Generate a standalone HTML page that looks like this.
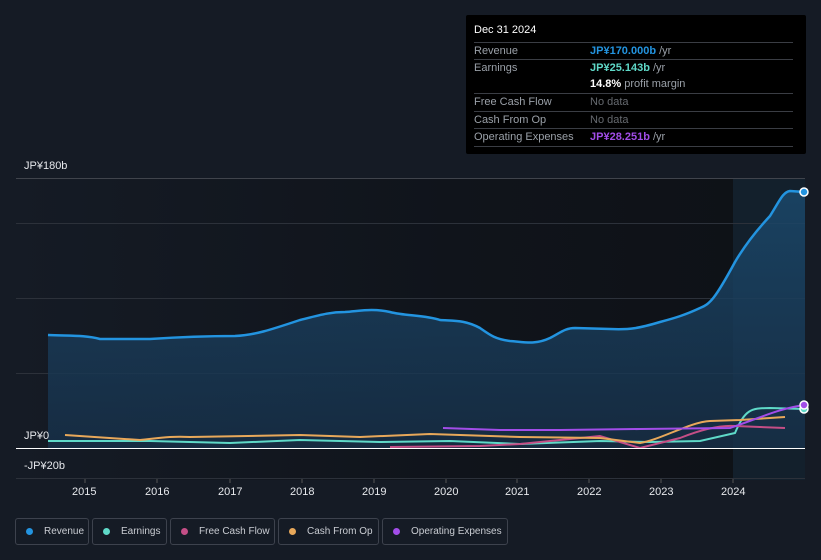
<!DOCTYPE html>
<html><head><meta charset="utf-8"><style>
html,body{margin:0;width:821px;height:560px;overflow:hidden}
body{background:#151b25;font-family:"Liberation Sans",sans-serif;position:relative}
.tt{position:absolute;left:466px;top:15px;width:340px;height:139px;background:#000;border-radius:2px}
.tt .h{position:absolute;left:8px;top:9px;color:#fff;font-size:11px}
.row{position:absolute;left:8px;width:319px;border-top:1px solid #3a3d44;height:17px;font-size:11px;color:#9aa0a8;white-space:nowrap}
.row span{position:absolute;left:116px;top:2px}
.row b{font-weight:bold}
.row .l{position:absolute;left:0;top:2px}
.lg{position:absolute;top:518px;height:27px;border:1px solid #3d424d;border-radius:3px;color:#c9ccd2;font-size:10px;line-height:25px;box-sizing:border-box;white-space:nowrap}
.lg i{position:absolute;left:10px;top:9px;width:7px;height:7px;border-radius:50%}
.lg span{position:absolute;left:28px;top:0}
.ax{position:absolute;color:#e6e8ec;font-size:11px}
</style></head><body>
<svg width="821" height="560" style="position:absolute;left:0;top:0">
<defs>
<linearGradient id="bg" x1="0" x2="1"><stop offset="0" stop-color="#151b25"/><stop offset="0.55" stop-color="#10141b"/><stop offset="1" stop-color="#0e1116"/></linearGradient>
<linearGradient id="rf" x1="0" x2="0" y1="0" y2="1"><stop offset="0" stop-color="#1b4a6e" stop-opacity="0.8"/><stop offset="1" stop-color="#173049" stop-opacity="0.8"/></linearGradient>
</defs>
<rect x="16" y="178" width="789" height="302" fill="url(#bg)"/>
<rect x="733" y="178" width="72" height="302" fill="#13202c"/>
<g stroke="#2c313a" stroke-width="1">
<line x1="16" x2="805" y1="178.5" y2="178.5" stroke="#40444c"/>
<line x1="16" x2="805" y1="223.5" y2="223.5"/>
<line x1="16" x2="805" y1="298.5" y2="298.5"/>
<line x1="16" x2="805" y1="373.5" y2="373.5"/>
<line x1="16" x2="805" y1="478.5" y2="478.5"/>
</g>
<path d="M48 335 C70 336 85 335 100 339 L150 339 C180 337 210 336 235 336 C255 335 270 330 300 320 C320 315 330 312 345 312 C360 311 372 308 390 312 C405 316 425 315 440 320 C455 321 465 320 480 328 C490 335 495 339 510 341 C525 342 535 345 550 338 C560 333 565 328 575 328 L610 329 C630 330 640 328 660 322 C675 318 685 315 700 308 C710 304 715 299 735 262 C745 245 755 232 770 216 C780 200 783 192 790 191 L805 192 L805 448 L48 448 Z" fill="url(#rf)"/>
<path d="M48 335 C70 336 85 335 100 339 L150 339 C180 337 210 336 235 336 C255 335 270 330 300 320 C320 315 330 312 345 312 C360 311 372 308 390 312 C405 316 425 315 440 320 C455 321 465 320 480 328 C490 335 495 339 510 341 C525 342 535 345 550 338 C560 333 565 328 575 328 L610 329 C630 330 640 328 660 322 C675 318 685 315 700 308 C710 304 715 299 735 262 C745 245 755 232 770 216 C780 200 783 192 790 191 L805 192" fill="none" stroke="#2394e0" stroke-width="2.5"/>
<path d="M48 441 L150 441 L230 443 L300 440 L380 442 L450 441 L520 444 L600 441 L650 442 L700 441 L735 433 C745 410 750 408 770 408 L805 409" fill="none" stroke="#5fd9c8" stroke-width="2"/>
<path d="M390 447 L480 446 L520 444 L600 436 L640 448 L680 438 C700 430 720 425 735 426 L785 428" fill="none" stroke="#c44e86" stroke-width="2"/>
<path d="M65 435 L140 440 C160 438 170 436 190 437 L300 435 L360 437 L430 434 L520 437 L600 438 L640 443 C660 440 690 422 710 421 L740 420 L785 417" fill="none" stroke="#e8a85a" stroke-width="2"/>
<path d="M443 428 L500 430 L560 430 L640 429 L730 428 C760 418 780 408 805 405" fill="none" stroke="#a24de8" stroke-width="2"/>
<line x1="16" x2="805" y1="448.5" y2="448.5" stroke="#fff" stroke-width="1"/>
<circle cx="804" cy="192" r="4" fill="#2394e0" stroke="#fff" stroke-width="1.5"/>
<circle cx="804" cy="409" r="4" fill="#5fd9c8" stroke="#fff" stroke-width="1.5"/>
<circle cx="804" cy="405" r="4" fill="#a24de8" stroke="#fff" stroke-width="1.5"/>
<g stroke="#555" stroke-width="1"><line x1="85" x2="85" y1="479" y2="483"/><line x1="157" x2="157" y1="479" y2="483"/><line x1="230" x2="230" y1="479" y2="483"/><line x1="302" x2="302" y1="479" y2="483"/><line x1="374" x2="374" y1="479" y2="483"/><line x1="446" x2="446" y1="479" y2="483"/><line x1="517" x2="517" y1="479" y2="483"/><line x1="589" x2="589" y1="479" y2="483"/><line x1="661" x2="661" y1="479" y2="483"/><line x1="733" x2="733" y1="479" y2="483"/></g>
</svg>
<div class="ax" style="left:24px;top:160px">JP¥180b</div>
<div class="ax" style="left:24px;top:430px">JP¥0</div>
<div class="ax" style="left:24px;top:460px">-JP¥20b</div>
<div class="ax" style="left:72px;top:486px">2015</div>
<div class="ax" style="left:145px;top:486px">2016</div>
<div class="ax" style="left:218px;top:486px">2017</div>
<div class="ax" style="left:290px;top:486px">2018</div>
<div class="ax" style="left:362px;top:486px">2019</div>
<div class="ax" style="left:434px;top:486px">2020</div>
<div class="ax" style="left:505px;top:486px">2021</div>
<div class="ax" style="left:577px;top:486px">2022</div>
<div class="ax" style="left:649px;top:486px">2023</div>
<div class="ax" style="left:721px;top:486px">2024</div>
<div class="tt">
<div class="h">Dec 31 2024</div>
<div class="row" style="top:27px"><div class="l">Revenue</div><span><b style="color:#2394e0">JP¥170.000b</b> /yr</span></div>
<div class="row" style="top:44px"><div class="l">Earnings</div><span><b style="color:#5fd9c8">JP¥25.143b</b> /yr</span></div>
<div class="row" style="top:61px;border-top:none"><span><b style="color:#fff">14.8%</b> profit margin</span></div>
<div class="row" style="top:78px"><div class="l">Free Cash Flow</div><span style="color:#666a70">No data</span></div>
<div class="row" style="top:96px"><div class="l">Cash From Op</div><span style="color:#666a70">No data</span></div>
<div class="row" style="top:113px;height:17px;border-bottom:1px solid #3a3d44"><div class="l">Operating Expenses</div><span><b style="color:#a24de8">JP¥28.251b</b> /yr</span></div>
</div>
<div class="lg" style="left:15px;width:74px"><i style="background:#2394e0"></i><span>Revenue</span></div>
<div class="lg" style="left:92px;width:75px"><i style="background:#5fd9c8"></i><span>Earnings</span></div>
<div class="lg" style="left:170px;width:105px"><i style="background:#c44e86"></i><span>Free Cash Flow</span></div>
<div class="lg" style="left:278px;width:101px"><i style="background:#e8a85a"></i><span>Cash From Op</span></div>
<div class="lg" style="left:382px;width:126px"><i style="background:#a24de8"></i><span>Operating Expenses</span></div>
</body></html>
